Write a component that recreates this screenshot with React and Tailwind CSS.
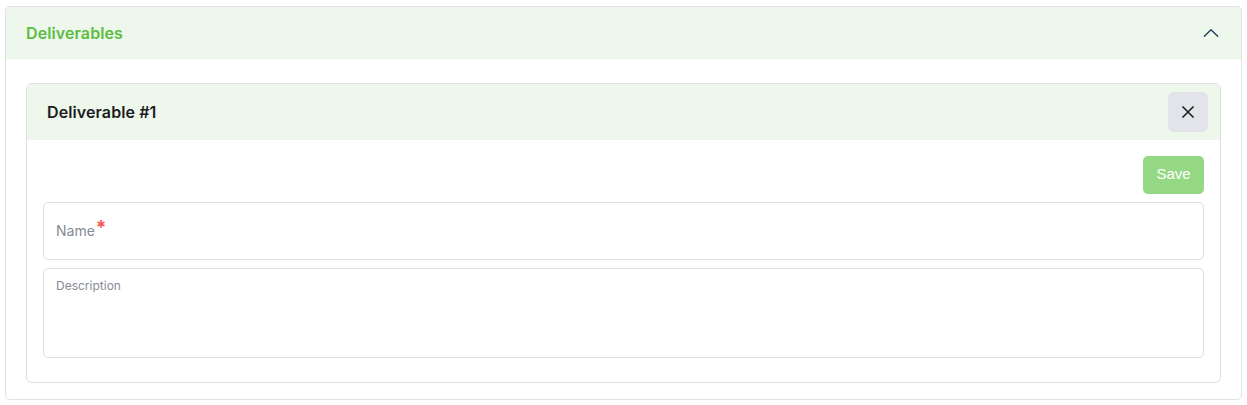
import React from "react";

export default function App() {
  return (
    <div className="w-[1247px] h-[405px] bg-white pt-[6px] pl-[5px] pr-[5px]" style={{ fontFamily: "Inter, 'Open Sans', sans-serif" }}>
      <div className="w-[1237px] border border-[#e0e1e3] rounded-[5px] overflow-hidden pb-4">
        <div className="h-[52px] bg-[#edf7eb] flex items-center justify-between pl-5 pr-[20px]">
          <span className="text-[16px] font-semibold text-[#5cbd42] tracking-[0.1px]">Deliverables</span>
          <svg width="20" height="20" viewBox="0 0 24 24" fill="none" stroke="#1e3a5f" strokeWidth="1.6" strokeLinecap="round" strokeLinejoin="round">
            <path d="M4 16 L12 8 L20 16" />
          </svg>
        </div>
        <div className="px-5 pt-6">
          <div className="border border-[#dcdde0] rounded-[6px] overflow-hidden">
            <div className="h-[56px] bg-[#edf7eb] flex items-center justify-between pl-5 pr-3">
              <span className="text-[16px] font-semibold text-[#1c1c1e] tracking-[0.1px]">Deliverable #1</span>
              <button className="w-[40px] h-[40px] rounded-[6px] bg-[#e2e4e9] flex items-center justify-center">
                <svg width="20" height="20" viewBox="0 0 24 24" fill="none" stroke="#1f1f1f" strokeWidth="2" strokeLinecap="round">
                  <path d="M6 6 L18 18 M18 6 L6 18" />
                </svg>
              </button>
            </div>
            <div className="px-4 pt-4 pb-6">
              <div className="flex justify-end">
                <button className="w-[61px] h-[38px] rounded-[5px] bg-[#95d884] text-white text-[15px] pb-[1px]" style={{ fontFamily: "'Liberation Sans', Arial, sans-serif" }}>Save</button>
              </div>
              <div className="mt-2 h-[58px] border border-[#dcdde0] rounded-[5px] flex items-center px-3 pb-[2px]">
                <span className="text-[14px] text-[#868b93]">Name</span>
                <span className="text-[#f25a5a] text-[19px] font-bold leading-none -mt-[6px] ml-[1px]">*</span>
              </div>
              <div className="mt-2 h-[90px] border border-[#dcdde0] rounded-[5px] px-3 pt-[3px]">
                <span className="text-[12px] text-[#868b93]">Description</span>
              </div>
            </div>
          </div>
        </div>
      </div>
    </div>
  );
}
